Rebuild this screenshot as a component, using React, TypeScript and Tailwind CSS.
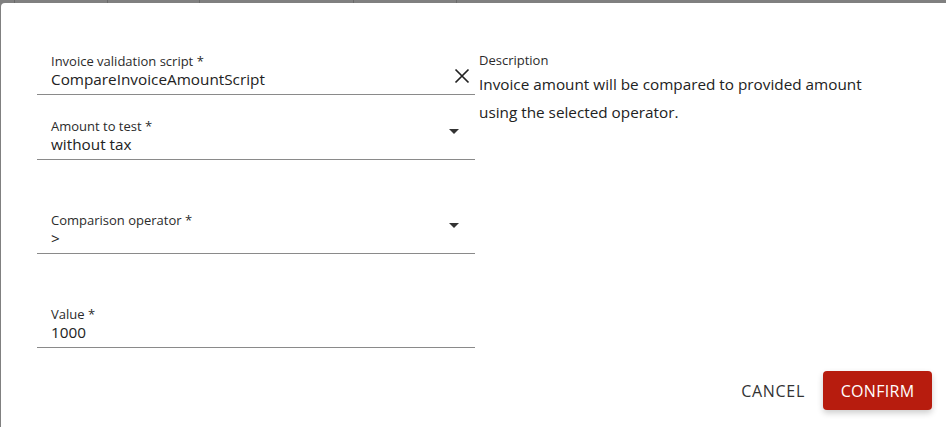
import React from "react";

function Caret() {
  return (
    <svg width="10" height="5" viewBox="0 0 10 5" className="shrink-0">
      <path d="M0 0 L10 0 L5 5 Z" fill="#333" />
    </svg>
  );
}

function Field({
  label,
  value,
  right,
  className = "",
  tight = false,
}: {
  label: string;
  value: string;
  right?: React.ReactNode;
  className?: string;
  tight?: boolean;
}) {
  return (
    <div
      className={`flex items-center border-b border-[#8a8a8a] pl-[14px] pb-[5px] ${tight ? "pr-[5px]" : "pr-[16px]"} ${className}`}
    >
      <div className="flex-1 min-w-0">
        <div className="text-[13px] leading-[16px] text-[#2b2b2b]">{label}</div>
        <div className="text-[15.3px] leading-[20px] text-[#222]">{value}</div>
      </div>
      {right}
    </div>
  );
}

export default function App() {
  return (
    <div
      className="w-[946px] h-[427px] bg-[#808080] pt-[3px] pl-[1px] overflow-hidden"
      style={{ fontFamily: '"Open Sans", "Noto Sans", sans-serif' }}
    >
      <div className="relative h-[3px] -mt-[3px]">
        <div className="absolute left-[13px] top-0 h-[3px] w-px bg-[#6a6a6a]" />
        <div className="absolute left-[106px] top-0 h-[3px] w-px bg-[#6a6a6a]" />
        <div className="absolute left-[198px] top-0 h-[3px] w-px bg-[#6a6a6a]" />
        <div className="absolute left-[352px] top-0 h-[3px] w-px bg-[#6a6a6a]" />
        <div className="absolute left-[455px] top-0 h-[3px] w-px bg-[#6a6a6a]" />
      </div>
      <div className="bg-white h-[424px] rounded-tl-[4px] flex flex-col">
        <div className="flex pt-[50px] pl-[36px]">
          <div className="w-[438px] flex flex-col">
            <Field
              label="Invoice validation script *"
              value="CompareInvoiceAmountScript"
              tight
              right={
                <svg width="16" height="16" viewBox="0 0 16 16" className="mt-[10px]">
                  <path d="M1.5 1.5 L14.5 14.5 M14.5 1.5 L1.5 14.5" stroke="#222" strokeWidth="1.7" />
                </svg>
              }
            />
            <Field
              label="Amount to test *"
              value="without tax"
              className="mt-[23px]"
              right={<div className="-mt-[10px]"><Caret /></div>}
            />
            <Field
              label="Comparison operator *"
              value=">"
              className="mt-[52px]"
              right={<div className="-mt-[10px]"><Caret /></div>}
            />
            <Field label="Value *" value="1000" className="mt-[52px]" />
          </div>
          <div className="pl-[4px] -mt-[1px]">
            <div className="text-[13px] leading-[16px] text-[#2b2b2b]">Description</div>
            <div className="mt-[2px] text-[15.3px] leading-[28px] text-[#222] w-[410px]">
              Invoice amount will be compared to provided amount
              <br />
              using the selected operator.
            </div>
          </div>
        </div>
        <div className="flex-1" />
        <div className="flex items-center justify-end gap-[18px] pr-[14px] pb-[17px]">
          <button className="text-[16px] tracking-[0.7px] text-[#333] h-[39px]">CANCEL</button>
          <button className="text-[16px] tracking-[0.3px] text-white bg-[#b71c0e] rounded-[4px] h-[39px] w-[109px] shadow-[0_3px_6px_rgba(0,0,0,0.2)]">
            CONFIRM
          </button>
        </div>
      </div>
    </div>
  );
}
